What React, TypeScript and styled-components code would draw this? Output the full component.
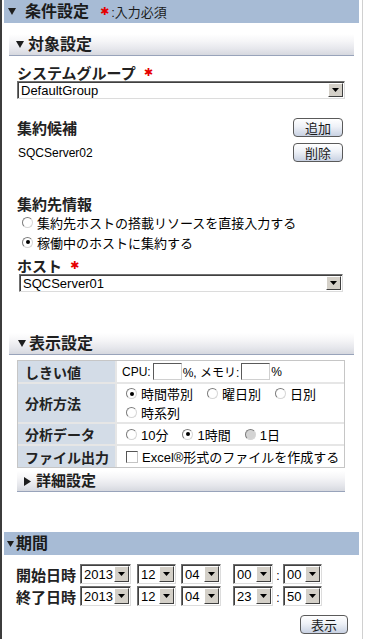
import React from 'react';
import styled, { createGlobalStyle } from 'styled-components';

const GlobalStyle = createGlobalStyle`
  html, body {
    margin: 0;
    padding: 0;
    background: #ffffff;
  }
  body {
    font-family: "Liberation Sans", "Noto Sans CJK JP", sans-serif;
    font-size: 13px;
    color: #000;
  }
`;

const Frame = styled.div`
  width: 363px;
  height: 639px;
  box-sizing: border-box;
  border-left: 2px solid #3c3c3c;
  border-right: 1px solid #d0d0d0;
  padding: 0 3px 0 2px;
  display: flex;
  flex-direction: column;
  overflow: hidden;
`;

const MainBar = styled.div<{ $pad: number; $gap: number; $mt?: number }>`
  flex-shrink: 0;
  height: 23px;
  margin-top: ${p => p.$mt ?? 0}px;
  display: flex;
  align-items: center;
  gap: ${p => p.$gap}px;
  padding-left: ${p => p.$pad}px;
  background: #a7bbd5;
`;

const BarTitle = styled.span`
  font-size: 16px;
  font-weight: bold;
  line-height: 20px;
  color: #1b1b1b;
`;

const BarNote = styled.span`
  display: flex;
  align-items: center;
  margin-left: 2px;
  font-size: 13px;
  color: #1b1b1b;
`;

const Req = styled.span<{ $ml?: number }>`
  color: #e60000;
  font-family: "DejaVu Sans", sans-serif;
  font-size: 11px;
  font-weight: bold;
  margin-left: ${p => p.$ml ?? 0}px;
  margin-right: 2px;
`;

const Section = styled.div`
  display: flex;
  flex-direction: column;
  padding: 0 5px;
`;

const SubHeader = styled.div<{ $mt: number; $h: number; $pad: number; $gap: number; $size: number }>`
  height: ${p => p.$h}px;
  margin-top: ${p => p.$mt}px;
  box-sizing: border-box;
  display: flex;
  align-items: center;
  gap: ${p => p.$gap}px;
  padding-left: ${p => p.$pad}px;
  background: linear-gradient(to bottom, #ffffff 0%, #f5f5f7 35%, #e6e7ec 70%, #d6d8df 100%);
  border-bottom: 1px solid #98a3ba;
  font-size: ${p => p.$size}px;
  font-weight: bold;
  line-height: 20px;
  color: #1e1e1e;
`;

const FieldArea = styled.div`
  display: flex;
  flex-direction: column;
  padding: 0 9px 0 8px;
`;

const FieldLabel = styled.div<{ $mt: number }>`
  margin-top: ${p => p.$mt}px;
  display: flex;
  align-items: center;
  height: 18px;
  font-size: 15px;
  font-weight: bold;
  color: #222;
`;

const Combo = styled.div<{ $w?: number; $h: number; $inset?: number }>`
  display: flex;
  box-sizing: border-box;
  width: ${p => (p.$w ? `${p.$w}px` : 'auto')};
  height: ${p => p.$h}px;
  margin: 0 ${p => p.$inset ?? 0}px;
  flex-shrink: 0;
  border: 1px solid;
  border-color: #707070 #dcdcdc #dcdcdc #707070;
  box-shadow: inset 1px 1px 0 #404040;
  background: #fff;
`;

const ComboText = styled.span`
  flex: 1;
  display: flex;
  align-items: center;
  padding-left: 3px;
  font-size: 13px;
  color: #000;
  white-space: nowrap;
`;

const ComboArrow = styled.span`
  width: 15px;
  margin: 1px 1px 1px 0;
  box-sizing: border-box;
  display: flex;
  align-items: center;
  justify-content: center;
  background: #d4d0c8;
  border: 1px solid;
  border-color: #ffffff #404040 #404040 #ffffff;
`;

const CandidateGrid = styled.div`
  margin-top: 18px;
  padding-right: 2px;
  display: grid;
  grid-template-columns: 1fr auto;
  row-gap: 5px;
  align-items: center;
`;

const CandidateTitle = styled.span`
  font-size: 15px;
  font-weight: bold;
  color: #222;
`;

const PlainText = styled.span`
  font-size: 12px;
  padding-left: 1px;
`;

const Btn = styled.button<{ $w: number }>`
  width: ${p => p.$w}px;
  height: 19px;
  padding: 0;
  box-sizing: border-box;
  border: 1px solid #5a5a5a;
  border-radius: 4px;
  background: linear-gradient(to bottom, #ffffff 0%, #eef1f7 45%, #c8d1e2 100%);
  font-family: "Noto Sans CJK JP", sans-serif;
  font-size: 13px;
  line-height: 17px;
  color: #1a1a1a;
`;

const RadioList = styled.div`
  display: flex;
  flex-direction: column;
  padding-left: 5px;
`;

const OptionLine = styled.div<{ $h: number }>`
  height: ${p => p.$h}px;
  display: flex;
  align-items: center;
  gap: 14px;
`;

const Option = styled.label`
  display: inline-flex;
  align-items: center;
  gap: 4px;
  font-size: 13px;
  white-space: nowrap;
`;

const RadioMark = styled.span<{ $on?: boolean; $off?: boolean }>`
  width: 11px;
  height: 11px;
  box-sizing: border-box;
  border-radius: 50%;
  border: 1px solid;
  border-color: #7c7c7c #d6d6d6 #d6d6d6 #7c7c7c;
  background: ${p => (p.$off ? '#d4d4d4' : '#fff')};
  display: inline-flex;
  align-items: center;
  justify-content: center;
  flex-shrink: 0;

  &::after {
    content: '';
    display: ${p => (p.$on ? 'block' : 'none')};
    width: 4px;
    height: 4px;
    border-radius: 50%;
    background: #000;
  }
`;

const CheckMark = styled.span`
  width: 12px;
  height: 12px;
  box-sizing: border-box;
  border: 1px solid;
  border-color: #555 #c4c4c4 #c4c4c4 #555;
  background: #fff;
  flex-shrink: 0;
`;

const SettingTable = styled.div`
  margin-top: 5px;
  display: grid;
  grid-template-columns: 97px 1fr;
  grid-template-rows: 21px 38px 20px 21px;
  gap: 2px;
  border: 1px solid #c6c6c6;
  background: #e6e6e6;
`;

const HeadCell = styled.div`
  display: flex;
  align-items: center;
  padding-left: 7px;
  background: #d3dce7;
  font-size: 14px;
  font-weight: bold;
  color: #222;
`;

const ValueCell = styled.div<{ $column?: boolean }>`
  display: flex;
  flex-direction: ${p => (p.$column ? 'column' : 'row')};
  justify-content: ${p => (p.$column ? 'center' : 'flex-start')};
  align-items: ${p => (p.$column ? 'flex-start' : 'center')};
  padding-left: ${p => (p.$column ? 9 : 5)}px;
  background: #fff;
  font-size: 12px;
`;

const SmallInput = styled.span`
  width: 29px;
  height: 17px;
  box-sizing: border-box;
  margin: 0 1px 0 2px;
  border: 1px solid;
  border-color: #5a5a5a #d0d0d0 #d0d0d0 #5a5a5a;
  background: #fff;
`;

const PeriodArea = styled.div`
  display: flex;
  flex-direction: column;
  padding: 9px 11px 0 12px;
`;

const DateRow = styled.div`
  display: flex;
  align-items: center;
  height: 20px;
  margin-bottom: 2px;
`;

const DateLabel = styled.span`
  width: 64px;
  font-size: 15px;
  font-weight: bold;
  color: #222;
`;

const Colon = styled.span`
  width: 10px;
  text-align: center;
  font-size: 12px;
  padding-top: 4px;
`;

const Spacer = styled.span<{ $w: number }>`
  width: ${p => p.$w}px;
  flex-shrink: 0;
`;

const Footer = styled.div`
  display: flex;
  justify-content: flex-end;
  margin-top: 7px;
`;

const Down = ({ w = 8, h = 7, color = '#1d1d1d' }: { w?: number; h?: number; color?: string }) => (
  <svg width={w} height={h} viewBox={`0 0 ${w} ${h}`}>
    <polygon points={`0,0 ${w},0 ${w / 2},${h}`} fill={color} />
  </svg>
);

const Right = () => (
  <svg width="7" height="9" viewBox="0 0 7 9">
    <polygon points="0,0 7,4.5 0,9" fill="#1d1d1d" />
  </svg>
);

const Select = ({ text, w, h = 18, inset }: { text: string; w?: number; h?: number; inset?: number }) => (
  <Combo $w={w} $h={h} $inset={inset}>
    <ComboText>{text}</ComboText>
    <ComboArrow>
      <svg width="7" height="4" viewBox="0 0 7 4">
        <polygon points="0,0 7,0 3.5,4" fill="#000" />
      </svg>
    </ComboArrow>
  </Combo>
);

const Radio = ({ label, on, off }: { label: string; on?: boolean; off?: boolean }) => (
  <Option>
    <RadioMark $on={on} $off={off} />
    {label}
  </Option>
);

const DateTime = ({ label, y, m, d, hh, mm }: { label: string; y: string; m: string; d: string; hh: string; mm: string }) => (
  <DateRow>
    <DateLabel>{label}</DateLabel>
    <Select text={y} w={51} h={20} />
    <Spacer $w={6} />
    <Select text={m} w={39} h={20} />
    <Spacer $w={5} />
    <Select text={d} w={40} h={20} />
    <Spacer $w={12} />
    <Select text={hh} w={40} h={20} />
    <Colon>:</Colon>
    <Select text={mm} w={39} h={20} />
  </DateRow>
);

export default function App() {
  return (
    <>
      <GlobalStyle />
      <Frame>
        <MainBar $pad={4} $gap={9}>
          <Down />
          <BarTitle>条件設定</BarTitle>
          <BarNote>
            <Req>✱</Req>:入力必須
          </BarNote>
        </MainBar>

        <Section>
          <SubHeader $mt={11} $h={22} $pad={7} $gap={4} $size={16}>
            <Down />
            対象設定
          </SubHeader>
          <FieldArea>
            <FieldLabel $mt={7}>
              システムグループ<Req $ml={8}>✱</Req>
            </FieldLabel>
            <Select text="DefaultGroup" />

            <CandidateGrid>
              <CandidateTitle>集約候補</CandidateTitle>
              <Btn $w={50}>追加</Btn>
              <PlainText>SQCServer02</PlainText>
              <Btn $w={50}>削除</Btn>
            </CandidateGrid>

            <FieldLabel $mt={32}>集約先情報</FieldLabel>
            <RadioList>
              <OptionLine $h={20}>
                <Radio label="集約先ホストの搭載リソースを直接入力する" />
              </OptionLine>
              <OptionLine $h={20}>
                <Radio label="稼働中のホストに集約する" on />
              </OptionLine>
            </RadioList>
            <FieldLabel $mt={4}>
              ホスト<Req $ml={8}>✱</Req>
            </FieldLabel>
            <Select text="SQCServer01" inset={2} />
          </FieldArea>

          <SubHeader $mt={41} $h={22} $pad={9} $gap={3} $size={16}>
            <Down />
            表示設定
          </SubHeader>
          <FieldArea>
            <SettingTable>
              <HeadCell>しきい値</HeadCell>
              <ValueCell>
                CPU:<SmallInput />%, メモリ:<SmallInput />%
              </ValueCell>
              <HeadCell>分析方法</HeadCell>
              <ValueCell $column>
                <OptionLine $h={19}>
                  <Radio label="時間帯別" on />
                  <Radio label="曜日別" />
                  <Radio label="日別" />
                </OptionLine>
                <OptionLine $h={19}>
                  <Radio label="時系列" />
                </OptionLine>
              </ValueCell>
              <HeadCell>分析データ</HeadCell>
              <ValueCell $column>
                <OptionLine $h={20}>
                  <Radio label="10分" />
                  <Radio label="1時間" on />
                  <Radio label="1日" off />
                </OptionLine>
              </ValueCell>
              <HeadCell>ファイル出力</HeadCell>
              <ValueCell $column>
                <Option>
                  <CheckMark />
                  Excel®形式のファイルを作成する
                </Option>
              </ValueCell>
            </SettingTable>
          </FieldArea>
          <FieldArea>
            <SubHeader $mt={3} $h={21} $pad={7} $gap={5} $size={15}>
              <Right />
              詳細設定
            </SubHeader>
          </FieldArea>
        </Section>

        <MainBar $pad={3} $gap={2} $mt={40}>
          <Down w={7} h={6} />
          <BarTitle>期間</BarTitle>
        </MainBar>
        <PeriodArea>
          <DateTime label="開始日時" y="2013" m="12" d="04" hh="00" mm="00" />
          <DateTime label="終了日時" y="2013" m="12" d="04" hh="23" mm="50" />
          <Footer>
            <Btn $w={48}>表示</Btn>
          </Footer>
        </PeriodArea>
      </Frame>
    </>
  );
}
